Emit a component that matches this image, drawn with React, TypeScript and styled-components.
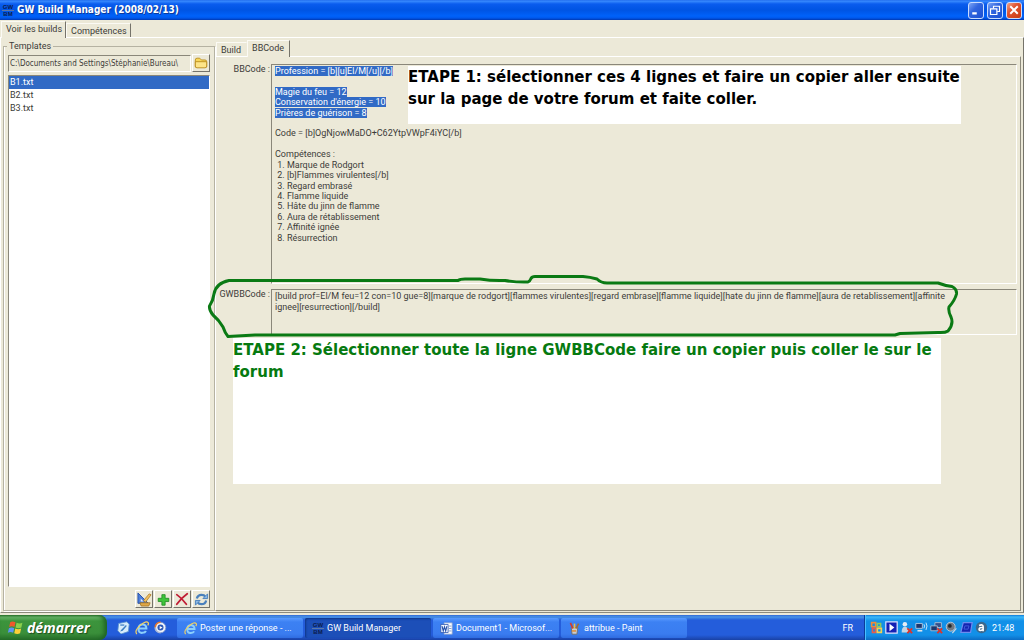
import React from "react";
import styled, { createGlobalStyle, css } from "styled-components";

const Global = createGlobalStyle`
  *, *::before, *::after { box-sizing: border-box; }
  body { margin: 0; background: #ece9d8; color: #3c3c38; font: 9px/12px Roboto, "Liberation Sans", sans-serif; }
  button, input, textarea { font: inherit; color: inherit; margin: 0; }
  button { padding: 0; border: 0; background: none; }
`;

const Screen = styled.div`
  min-height: 100vh;
  display: flex;
  flex-direction: column;
  overflow: hidden;
`;

/* ---------- title bar ---------- */

const TitleBar = styled.header`
  height: 20px;
  display: flex;
  align-items: center;
  gap: 3px;
  padding: 0 2px;
  background: linear-gradient(#1a63e8 0, #3a8cff 1px, #0a5cee 4px, #0054e3 10px, #0062fa 16px, #0058ec 18px, #0138b0 20px);
`;

const Title = styled.h1`
  flex: 1;
  margin: 0;
  color: #fff;
  font: bold 10px/16px "DejaVu Sans Condensed", "DejaVu Sans", sans-serif;
  text-shadow: 1px 1px 0 #0b3a9c;
`;

const Caption = styled.button<{ $close?: boolean }>`
  width: 16px;
  height: 17px;
  display: grid;
  place-items: center;
  border: 1px solid #c9dcff;
  border-radius: 3px;
  background: ${(p) =>
    p.$close
      ? "linear-gradient(135deg, #f0a58c, #e0532f 40%, #c83c14)"
      : "linear-gradient(135deg, #7da5f5, #3166e0 40%, #1c4fd0)"};
`;

/* ---------- tabs ---------- */

const TabRow = styled.div<{ $inner?: boolean }>`
  display: flex;
  align-items: flex-end;
  height: ${(p) => (p.$inner ? 16 : 17)}px;
  padding-left: 1px;
`;

const Tab = styled.button<{ $active?: boolean; $inner?: boolean }>`
  position: relative;
  height: ${(p) => (p.$active ? 17 : 14)}px;
  margin-bottom: ${(p) => (p.$active ? -1 : 0)}px;
  padding: 0 ${(p) => (p.$inner ? 5 : 3)}px ${(p) => (p.$active ? 3 : 0)}px 4px;
  border-top: 1px solid #fbfaf4;
  border-left: 1px solid #fbfaf4;
  border-right: 1px solid ${(p) => (p.$inner && !p.$active ? "#ece9d8" : "#75736a")};
  background: #ece9d8;
`;

const Workspace = styled.main`
  flex: 1;
  display: flex;
  border-top: 1px solid #fff;
  border-left: 1px solid #fff;
  border-right: 1px solid #75736a;
  border-bottom: 1px solid #8d8a7c;
  padding: 2px 2px 1px 1px;
`;

/* ---------- template list ---------- */

const Templates = styled.fieldset`
  width: 212px;
  flex: none;
  display: flex;
  flex-direction: column;
  gap: 3px;
  margin: 0 0 0 1px;
  padding: 2px 4px;
  border: 1px solid #b5b2a2;
  box-shadow: inset 1px 0 0 #fff, 1px 1px 0 #fff;

  legend {
    padding: 0 2px;
    margin-left: -1px;
    line-height: 12px;
  }
`;

const sunken = css`
  border: 1px solid;
  border-color: #8a877a #fff #fff #8a877a;
`;

const PathRow = styled.div`
  display: flex;
  align-items: center;
  gap: 1px;
`;

const PathInput = styled.input`
  flex: 1;
  min-width: 0;
  height: 17px;
  padding: 0 1px;
  background: #ece9d8;
  font: 8px/12px "DejaVu Sans Condensed", "DejaVu Sans", sans-serif;
  ${sunken}
`;

const ToolButton = styled.button`
  width: 18px;
  height: 18px;
  display: grid;
  place-items: center;
  border: 1px solid;
  border-color: #fff #75736a #75736a #fff;
  background: #ece9d8;
`;

const FileList = styled.ul`
  flex: 1;
  margin: 0;
  padding: 0;
  list-style: none;
  background: #fff;
  ${sunken}
`;

const FileItem = styled.li<{ $selected?: boolean }>`
  padding-left: 1px;
  line-height: 13px;
  background: ${(p) => (p.$selected ? "#316ac5" : "transparent")};
  color: ${(p) => (p.$selected ? "#fff" : "inherit")};
`;

const Tools = styled.div`
  display: flex;
  justify-content: flex-end;
  gap: 1px;
`;

/* ---------- build details ---------- */

const Details = styled.section`
  flex: 1;
  min-width: 0;
  display: flex;
  flex-direction: column;
`;

const TabPanel = styled.div`
  flex: 1;
  display: flex;
  flex-direction: column;
  gap: 5px;
  padding: 7px 3px 0;
  border: 1px solid;
  border-color: #fff #8d8a7c #8d8a7c #fff;
`;

const Field = styled.div`
  position: relative;
  display: flex;
`;

const FieldLabel = styled.label`
  width: 52px;
  flex: none;
  padding-right: 1px;
  line-height: 11px;
  text-align: right;
  white-space: nowrap;
`;

const CodeBox = styled.div`
  position: relative;
  flex: 1;
  height: 220px;
  padding: 1px 3px;
  ${sunken}
`;

const CodeLines = styled.div`
  height: 177px;
  display: grid;
  grid-auto-rows: 1fr;
  line-height: 10px;
  white-space: pre;
`;

const Marked = styled.mark`
  background: #316ac5;
  color: #fff;
`;

const GwCode = styled.textarea`
  flex: 1;
  min-width: 0;
  height: 46px;
  padding: 1px 3px;
  line-height: 11px;
  resize: none;
  overflow: hidden;
  outline: 0;
  background: #ece9d8;
  ${sunken}
`;

const Note = styled.p`
  margin: 0;
  background: #fff;
  color: #000;
  font: bold 15px/22px "DejaVu Sans", Verdana, sans-serif;
`;

const StepOne = styled(Note)`
  position: absolute;
  left: 136px;
  top: 1px;
  width: 553px;
  height: 58px;
  white-space: pre;
`;

const StepTwo = styled(Note)`
  margin: -2px 76px 0 14px;
  padding-top: 1px;
  height: 146px;
  color: #067a10;
`;

const Outline = styled.svg`
  position: absolute;
  left: 0;
  top: 0;
  overflow: visible;
  pointer-events: none;
`;

/* ---------- taskbar ---------- */

const Taskbar = styled.footer`
  height: 25px;
  margin-top: 2px;
  display: flex;
  align-items: stretch;
  color: #fff;
  background: linear-gradient(#3168d5 0, #4993e6 2px, #245ddb 5px, #245ddb 20px, #1941a5 25px);
`;

const Start = styled.button`
  width: 107px;
  display: flex;
  align-items: center;
  gap: 3px;
  padding-left: 7px;
  border-radius: 0 8px 8px 0;
  background: linear-gradient(#2f7a2f 0, #6cb86c 2px, #3c943c 6px, #3a8f3a 18px, #27702a 25px);
  box-shadow: inset -3px 0 4px #1f6425;
  color: #fff;
  font: italic bold 14px/18px "Open Sans", "DejaVu Sans", sans-serif;
  text-shadow: 1px 1px 1px #1c4d1c;
`;

const QuickLaunch = styled.div`
  width: 70px;
  display: flex;
  align-items: center;
  gap: 5px;
  padding-left: 10px;
`;

const Task = styled.button<{ $active?: boolean }>`
  width: 126px;
  height: 20px;
  margin: 3px 2px 0 0;
  display: flex;
  align-items: center;
  gap: 3px;
  padding-left: 7px;
  border-radius: 2px;
  white-space: nowrap;
  color: #fff;
  background: ${(p) => (p.$active ? "#1c4fb8" : "linear-gradient(#5a9bff, #3c81f3 4px, #3a7cf0 16px, #2f6ce0)")};
  box-shadow: ${(p) => (p.$active ? "inset 1px 1px 2px #0f3687" : "none")};
`;

const Language = styled.span`
  margin-left: auto;
  padding-right: 11px;
  align-self: center;
`;

const Tray = styled.div`
  width: 160px;
  display: flex;
  align-items: center;
  gap: 2px;
  padding-left: 5px;
  border-left: 1px solid #0b3c9a;
  background: linear-gradient(#0d7ad8 0, #3cb8f8 2px, #1290e8 6px, #1290e8 20px, #0c6cc4 25px);
  box-shadow: inset 1px 0 0 #4ac0ff;

  time {
    margin-left: 2px;
  }
`;

/* ---------- icons ---------- */

const icon = (size: number, children: React.ReactNode) => (
  <svg width={size} height={size} viewBox="0 0 16 16" aria-hidden="true">
    {children}
  </svg>
);

const LogoBox = styled.span`
  width: 12px;
  flex: none;
  text-align: center;
  color: #0b1c4c;
  font: bold 6px/6px "Liberation Sans", sans-serif;

  span {
    display: block;
  }
  span + span {
    border-top: 1px solid #5c78a8;
  }
`;

const GwLogo = () => (
  <LogoBox aria-hidden="true">
    <span>GW</span>
    <span>BM</span>
  </LogoBox>
);

const FolderIcon = () =>
  icon(
    14,
    <g stroke="#b88a1c" strokeLinejoin="round">
      <path d="M1.5 12.5V4.5q0-2 2-2h3l2 2h4q2 0 2 2v6z" fill="#f8d75a" />
      <path d="M1.500 6.500h13v5q0 2-2 2h-9q-2 0-2-2z" fill="#fde488" />
    </g>
  );

const DesignIcon = () =>
  icon(
    15,
    <>
      <path d="M1 1v11h11z" fill="#4c7fdc" stroke="#254ea8" />
      <path d="M4 7v3h3z" fill="#dfe9fb" />
      <path d="m7 9 6-7 2 1-6 8z" fill="#f0c060" stroke="#a87420" strokeWidth=".8" />
      <path d="M3 11.500h11l-1.500 3.500H4.500z" fill="#e0a848" stroke="#9c6c1c" strokeWidth=".8" />
    </>
  );

const PlusIcon = () =>
  icon(13, <path d="M6 2h4v4.500h4.500v4H10V15H6v-4.500H1.500v-4H6z" fill="#3fc43a" stroke="#1f8a22" />);

const DeleteIcon = () =>
  icon(14, <path d="M2 3q6 4 11 11M14 2Q7 7 2 14" fill="none" stroke="#c01c34" strokeWidth="2" strokeLinecap="round" />);

const RefreshIcon = () =>
  icon(
    15,
    <g fill="none" stroke="#4a80bc" strokeWidth="2.400">
      <path d="M3 7q1-4 5-4 3 0 4 2" />
      <path d="M13 9q-1 4-5 4-3 0-4-2" />
      <path d="M14.500 2v5h-5zM1.500 14V9h5z" fill="#8cb8e4" strokeWidth="1" />
    </g>
  );

const WindowsIcon = () =>
  icon(
    17,
    <>
      <path d="M3 3q2-1.500 5 0L7 7.500Q4.500 6.200 2 7.500z" fill="#f0582c" />
      <path d="M9 3.500q3 1.300 5.500 0L13.500 8q-2.500 1.300-5.500 0z" fill="#8cd04c" />
      <path d="M1.800 8.600q2.500-1.300 5 0L5.800 13q-2.500-1.300-5 0z" fill="#5c94f4" />
      <path d="M7.800 9q3 1.300 5.500 0l-1 4.500q-2.500 1.300-5.500 0z" fill="#fcd038" />
    </>
  );

const DesktopIcon = () =>
  icon(
    13,
    <>
      <path d="m2 3 10-2 3 3-1 9-9 3-4-4z" fill="#d8ecfc" stroke="#5c94cc" />
      <path d="m5 11 6-6 1 1-5 6-3 1z" fill="#3c7cc0" />
      <path d="M4 5h5" stroke="#3c7cc0" strokeWidth="1.500" />
    </>
  );

const ExplorerIcon = ({ size = 14 }: { size?: number }) =>
  icon(
    size,
    <>
      <path d="M4 8.500h9Q13 4 8.500 4T4 9t4.500 4.500q3 0 4-2" fill="none" stroke="#8cd0fc" strokeWidth="2.400" />
      <path d="M2 15Q-1 11 6 5t9-3q1 1-.5 3" fill="none" stroke="#f4d060" strokeWidth="1.400" />
    </>
  );

const MediaIcon = () =>
  icon(
    13,
    <>
      <circle cx="8" cy="8" r="6.500" fill="#eef2fa" stroke="#7c94c8" />
      <path d="M8 1.500A6.500 6.500 0 0 0 1.500 8" stroke="#e8782c" strokeWidth="2" fill="none" />
      <path d="M1.500 8A6.500 6.500 0 0 0 8 14.500" stroke="#a8b8d8" strokeWidth="2" fill="none" />
      <circle cx="8" cy="8" r="3.700" fill="#2c58b8" />
      <path d="m7 6 3.500 2L7 10z" fill="#fff" />
    </>
  );

const WordIcon = () =>
  icon(
    13,
    <>
      <path d="M5 1h10v14H5z" fill="#fff" stroke="#8ca4d0" />
      <path d="M11 5h3M11 8h3M11 11h3" stroke="#6c8cc8" />
      <path d="M1 3h9v10H1z" fill="#f4f8ff" stroke="#2c58b0" />
      <path d="m2.500 5 1.500 6 1.500-5L7 11l1.500-6" fill="none" stroke="#2450a8" strokeWidth="1.300" />
    </>
  );

const PaintIcon = () =>
  icon(
    13,
    <>
      <path d="M4 7h8l-1 8H5z" fill="#c8ccd4" stroke="#706858" />
      <path d="M6 8 3 1" stroke="#d83c28" strokeWidth="2" />
      <path d="M8 8V2" stroke="#f0c040" strokeWidth="2" />
      <path d="m10 8 3-6" stroke="#a86c30" strokeWidth="2" />
      <path d="M5 11h5" stroke="#e09038" strokeWidth="2" />
    </>
  );

const OfficeTrayIcon = () =>
  icon(
    13,
    <g fill="none" strokeWidth="2">
      <path d="M2 2h5v5H2z" stroke="#f08c38" />
      <path d="M9 3h4v4H9z" stroke="#8cc860" />
      <path d="M3 9h4v5H3z" stroke="#e85c4c" />
      <path d="M9 9h5v5H9z" stroke="#f4d050" />
    </g>
  );

const PlayTrayIcon = () =>
  icon(
    13,
    <>
      <path d="M1 1h14v14H1z" fill="#1420b4" stroke="#dce4ff" strokeWidth="1.500" />
      <path d="m5.500 3.500 6 4.500-6 4.500z" fill="#fff" />
    </>
  );

const cross = <path d="m9 9 6 6M15 9l-6 6" stroke="#e03428" strokeWidth="2.200" />;

const MessengerTrayIcon = () =>
  icon(
    13,
    <>
      <circle cx="6" cy="4" r="2.800" fill="#e4ecf4" />
      <path d="M2 14q0-7 4-7t5 7z" fill="#c4d4e4" />
      {cross}
    </>
  );

const WirelessTrayIcon = () =>
  icon(
    13,
    <>
      <path d="M1 3h8v6H1z" fill="#1c3870" stroke="#c8d8e8" />
      <path d="M3 12h6" stroke="#dce4ec" strokeWidth="2" />
      <path d="M11 4q1.500 2 0 5M13.500 2q2.500 4 0 9" fill="none" stroke="#e8f4ff" />
    </>
  );

const NetworkTrayIcon = () =>
  icon(
    13,
    <>
      <path d="M6 2h8v6H6z" fill="#34508c" stroke="#b8c8d8" />
      <path d="M1 6h8v6H1z" fill="#1c3870" stroke="#b8c8d8" />
      {cross}
    </>
  );

const VolumeTrayIcon = () =>
  icon(
    13,
    <>
      <circle cx="7" cy="7" r="5.500" fill="#707880" stroke="#d0d8e0" />
      <circle cx="6" cy="6" r="2.300" fill="#20282c" />
      <path d="m9 15 5-6" stroke="#c8d4e0" strokeWidth="1.500" />
    </>
  );

const DisplayTrayIcon = () =>
  icon(
    13,
    <>
      <path d="M4 2h11l-2 12H1z" fill="#1424b0" stroke="#6c8cf0" strokeWidth="1.500" />
      <path d="M6 6h5l-1 4H5z" fill="none" stroke="#4864e0" />
    </>
  );

const AntivirusTrayIcon = () =>
  icon(
    13,
    <>
      <circle cx="8" cy="8" r="7" fill="#3c688c" />
      <path d="M5 5.500q5-2 5 1.500v5.500M10 8q-5-.5-5 2.200t5 .3" fill="none" stroke="#fff" strokeWidth="2" />
    </>
  );

/* ---------- content ---------- */

const codeLines: { text: string; marked?: boolean }[] = [
  { text: "Profession = [b][u]El/M[/u][/b]", marked: true },
  { text: " " },
  { text: "Magie du feu = 12", marked: true },
  { text: "Conservation d'énergie = 10", marked: true },
  { text: "Prières de guérison = 8", marked: true },
  { text: " " },
  { text: "Code = [b]OgNjowMaDO+C62YtpVWpF4iYC[/b]" },
  { text: " " },
  { text: "Compétences :" },
  { text: " 1. Marque de Rodgort" },
  { text: " 2. [b]Flammes virulentes[/b]" },
  { text: " 3. Regard embrasé" },
  { text: " 4. Flamme liquide" },
  { text: " 5. Hâte du jinn de flamme" },
  { text: " 6. Aura de rétablissement" },
  { text: " 7. Affinité ignée" },
  { text: " 8. Résurrection" },
];

const gwCode =
  "[build prof=El/M feu=12 con=10 gue=8][marque de rodgort][flammes virulentes][regard embrase][flamme liquide][hate du jinn de flamme][aura de retablissement][affinite\nignee][resurrection][/build]";

export default function App() {
  return (
    <Screen>
      <Global />
      <TitleBar>
        <GwLogo />
        <Title>GW Build Manager (2008/02/13)</Title>
        <Caption aria-label="Réduire">{icon(12, <path d="M3 12.500h6" stroke="#fff" strokeWidth="3" />)}</Caption>
        <Caption aria-label="Restaurer">
          {icon(
            12,
            <g fill="none" stroke="#fff" strokeWidth="1.600">
              <path d="M6 6V3h8v7h-3" />
              <path d="M2 6.500h8.500V14H2z" />
            </g>
          )}
        </Caption>
        <Caption $close aria-label="Fermer">
          {icon(12, <path d="m3 3 10 10M13 3 3 13" stroke="#fff" strokeWidth="2.600" />)}
        </Caption>
      </TitleBar>

      <TabRow role="tablist">
        <Tab role="tab" aria-selected $active>
          Voir les builds
        </Tab>
        <Tab role="tab">Compétences</Tab>
      </TabRow>

      <Workspace>
        <Templates>
          <legend>Templates</legend>
          <PathRow>
            <PathInput aria-label="Dossier" readOnly value={"C:\\Documents and Settings\\Stéphanie\\Bureau\\"} />
            <ToolButton aria-label="Parcourir">
              <FolderIcon />
            </ToolButton>
          </PathRow>
          <FileList>
            <FileItem $selected>B1.txt</FileItem>
            <FileItem>B2.txt</FileItem>
            <FileItem>B3.txt</FileItem>
          </FileList>
          <Tools>
            <ToolButton aria-label="Modifier">
              <DesignIcon />
            </ToolButton>
            <ToolButton aria-label="Ajouter">
              <PlusIcon />
            </ToolButton>
            <ToolButton aria-label="Supprimer">
              <DeleteIcon />
            </ToolButton>
            <ToolButton aria-label="Actualiser">
              <RefreshIcon />
            </ToolButton>
          </Tools>
        </Templates>

        <Details>
          <TabRow $inner role="tablist">
            <Tab role="tab" $inner>
              Build
            </Tab>
            <Tab role="tab" aria-selected $inner $active>
              BBCode
            </Tab>
          </TabRow>
          <TabPanel role="tabpanel">
            <Field>
              <FieldLabel as="span" id="bbcode-label">
                BBCode :
              </FieldLabel>
              <CodeBox role="textbox" aria-multiline aria-readonly aria-labelledby="bbcode-label">
                <CodeLines>
                  {codeLines.map((line, i) => (
                    <div key={i}>{line.marked ? <Marked>{line.text}</Marked> : line.text}</div>
                  ))}
                </CodeLines>
                <StepOne>
                  {"ETAPE 1: sélectionner ces 4 lignes et faire un copier aller ensuite\nsur la page de votre forum et faite coller."}
                </StepOne>
              </CodeBox>
            </Field>
            <Field>
              <FieldLabel htmlFor="gwbbcode">GWBBCode :</FieldLabel>
              <GwCode id="gwbbcode" readOnly value={gwCode} />
              <Outline width="800" height="46" viewBox="219 289 800 46" aria-hidden="true">
                <path
                  d="M229 280.500H458Q460 279 465 279H480Q492 281 505 280.500 518 282.500 528 282 530 281 531 278.500 532 276.500 535 276.500H583Q590 277 597 279 601 283 607 283H938Q946 286 952 286.500 957 289 956.500 294 955 300 949 307 948 311 951 317 954 324 948 331 945 333 938 332.500L900 333.500 895 335H255L228 336.500Q225 333 223 327 219 320 213 315 209 310 209.500 306 213 301 214 294 216 283 229 280.500Z"
                  fill="none"
                  stroke="#0a7a14"
                  strokeWidth="3"
                  strokeLinejoin="round"
                />
              </Outline>
            </Field>
            <StepTwo>ETAPE 2: Sélectionner toute la ligne GWBBCode faire un copier puis coller le sur le forum</StepTwo>
          </TabPanel>
        </Details>
      </Workspace>

      <Taskbar>
        <Start>
          <WindowsIcon />
          démarrer
        </Start>
        <QuickLaunch>
          <DesktopIcon />
          <ExplorerIcon />
          <MediaIcon />
        </QuickLaunch>
        <Task>
          <ExplorerIcon size={13} />
          Poster une réponse - ...
        </Task>
        <Task $active>
          <GwLogo />
          GW Build Manager
        </Task>
        <Task>
          <WordIcon />
          Document1 - Microsof...
        </Task>
        <Task>
          <PaintIcon />
          attribue - Paint
        </Task>
        <Language>FR</Language>
        <Tray>
          <OfficeTrayIcon />
          <PlayTrayIcon />
          <MessengerTrayIcon />
          <WirelessTrayIcon />
          <NetworkTrayIcon />
          <VolumeTrayIcon />
          <DisplayTrayIcon />
          <AntivirusTrayIcon />
          <time>21:48</time>
        </Tray>
      </Taskbar>
    </Screen>
  );
}
